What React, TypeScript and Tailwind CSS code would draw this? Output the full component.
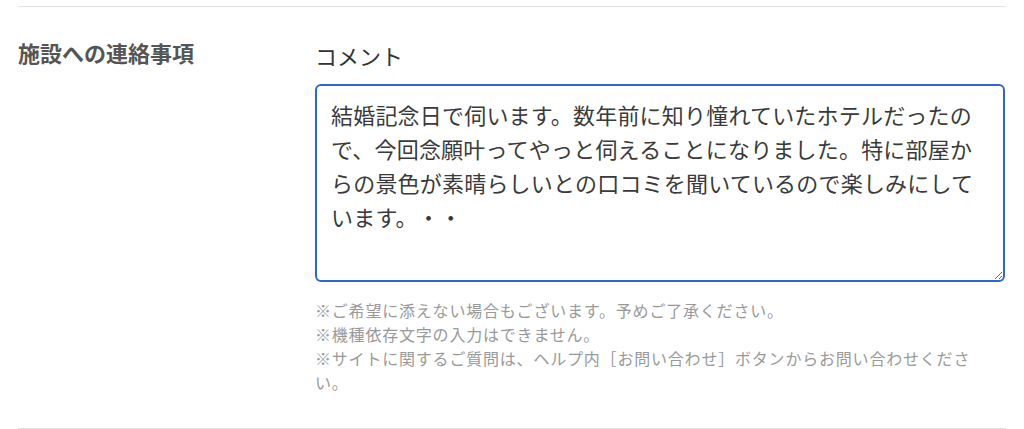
import React from 'react';

const comment =
  '結婚記念日で伺います。数年前に知り憧れていたホテルだったので、今回念願叶ってやっと伺えることになりました。特に部屋からの景色が素晴らしいとの口コミを聞いているので楽しみにしています。・・';

const App: React.FC = () => {
  return (
    <div
      className="w-[1024px] h-[429px] bg-white px-[18px] pt-[6px]"
      style={{ fontFamily: '"Noto Sans CJK JP", "Noto Sans", sans-serif' }}
    >
      <div className="border-t border-[#e3e3e3]">
        <div className="flex pt-[29px] pb-[34px] border-b border-[#e3e3e3]">
          {/* Section title */}
          <div className="w-[297px] shrink-0">
            <h2 className="text-[22px] leading-[33px] font-bold text-[#555555]">
              施設への連絡事項
            </h2>
          </div>

          {/* Comment field */}
          <div className="w-[690px]">
            <label className="block mt-[3px] text-[22px] leading-[33px] text-[#333333]">
              コメント
            </label>
            <textarea
              defaultValue={comment}
              className="mt-[12px] block w-[690px] h-[198px] border-2 border-[#2f66cf] rounded-[6px] pl-[14px] pr-[14px] pt-[11px] text-[22px] leading-[34px] tracking-[0.2px] text-[#3a3a3a] outline-none resize-y [text-spacing-trim:space-all]"
            />
            <div className="mt-[16px] w-[680px] text-[16px] leading-[24px] tracking-[0.8px] text-[#999999] [text-spacing-trim:space-all]">
              <p>※ご希望に添えない場合もございます。予めご了承ください。</p>
              <p>※機種依存文字の入力はできません。</p>
              <p>※サイトに関するご質問は、ヘルプ内［お問い合わせ］ボタンからお問い合わせください。</p>
            </div>
          </div>
        </div>
      </div>
    </div>
  );
};

export default App;
